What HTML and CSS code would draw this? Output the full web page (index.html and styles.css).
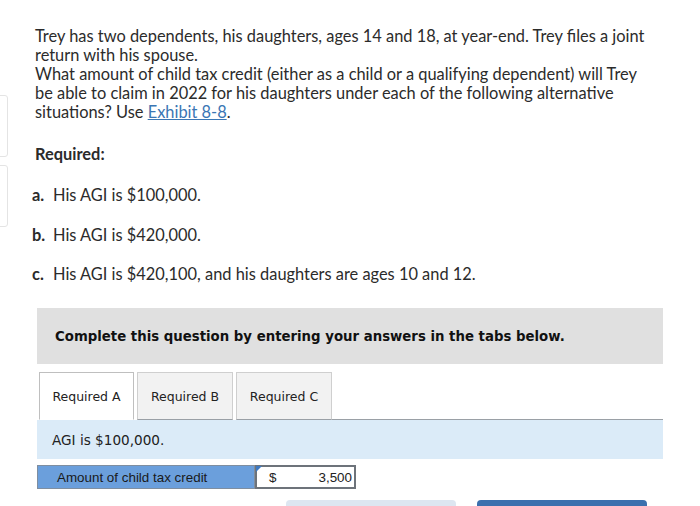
FILE: index.html
```html
<!DOCTYPE html>
<html>
<head>
<meta charset="utf-8">
<link rel="stylesheet" href="styles.css">
</head>
<body>
<div class="edge edge-top"></div>
<div class="edge edge-bottom"></div>
<main class="page">
  <p class="intro">Trey has two dependents, his daughters, ages 14 and 18, at year-end. Trey files a joint return with his spouse.<br>What amount of child tax credit (either as a child or a qualifying dependent) will Trey be able to claim in 2022 for his daughters under each of the following alternative situations? Use <a class="link" href="#">Exhibit 8-8</a>.</p>
  <p class="required">Required:</p>
  <ol class="items">
    <li><span class="mark">a.</span>His AGI is $100,000.</li>
    <li><span class="mark">b.</span>His AGI is $420,000.</li>
    <li><span class="mark">c.</span>His AGI is $420,100, and his daughters are ages 10 and 12.</li>
  </ol>
  <div class="notice">Complete this question by entering your answers in the tabs below.</div>
  <div class="tabs">
    <div class="tab active">Required A</div>
    <div class="tab">Required B</div>
    <div class="tab">Required C</div>
    <div class="tab-fill"></div>
  </div>
  <div class="panel">AGI is $100,000.</div>
  <div class="answer">
    <div class="answer-label">Amount of child tax credit</div>
    <div class="answer-input"><span class="dollar">$</span><span class="value">3,500</span></div>
  </div>
  <div class="buttons">
    <div class="btn btn-light"></div>
    <div class="btn btn-dark"></div>
  </div>
</main>
</body>
</html>
```

FILE: styles.css
```css
html, body {
  margin: 0;
  padding: 0;
  background: #ffffff;
  overflow: hidden;
}
body {
  width: 700px;
  height: 506px;
  position: relative;
}
.edge {
  position: absolute;
  left: -4px;
  width: 10px;
  border: 1px solid #e4e4e4;
  border-radius: 3px;
}
.edge-top { top: 95px; height: 60px; }
.edge-bottom { top: 165px; height: 60px; }
.page {
  padding: 26px 0 0 35px;
  width: 628px;
  font-family: "Lato", "Liberation Sans", sans-serif;
  color: #2b2b2b;
}
.intro {
  margin: 0;
  font-size: 16.4px;
  line-height: 19px;
  width: 614px;
}
.link {
  display: inline-block;
  line-height: 19px;
  color: #3a76b4;
  text-decoration: underline;
}
.required {
  margin: 23px 0 0 0;
  font-size: 16.4px;
  font-weight: bold;
  line-height: 19px;
}
.items {
  list-style: none;
  margin: 22px 0 0 -3px;
  padding: 0;
  font-size: 16.4px;
  line-height: 19px;
}
.items li {
  display: flex;
  margin-bottom: 21px;
}
.items li:nth-child(2) { margin-bottom: 20px; }
.items li:last-child { margin-bottom: 0; }
.mark {
  font-weight: bold;
  width: 21px;
}
.notice {
  margin: 25px 0 0 2px;
  width: 608px;
  height: 56px;
  padding-left: 18px;
  background: #e0e0e0;
  display: flex;
  align-items: center;
  font-family: "DejaVu Sans", Verdana, sans-serif;
  font-weight: bold;
  font-size: 13.3px;
  color: #111;
}
.tabs {
  display: flex;
  margin: 8px 0 0 2px;
  width: 626px;
  height: 48px;
  font-family: "DejaVu Sans", Verdana, sans-serif;
  font-size: 12.5px;
  color: #222;
}
.tab {
  margin-right: 3px;
  border: 1px solid #cfcfcf;
  border-bottom: 1px solid #9aa0a6;
  background: #f2f2f2;
  display: flex;
  align-items: center;
  justify-content: center;
  box-sizing: border-box;
  width: 96px;
}
.tab.active {
  background: #ffffff;
  border-color: #bfbfbf;
  border-bottom-color: #ffffff;
  margin-left: 2px;
  width: 95px;
}
.tab-fill {
  flex: 1;
  border-bottom: 1px solid #9aa0a6;
  margin-left: -3px;
}
.panel {
  margin-left: 2px;
  width: 611px;
  height: 39px;
  padding-left: 15px;
  background: #dbebf8;
  display: flex;
  align-items: center;
  font-family: "DejaVu Sans", Verdana, sans-serif;
  font-size: 13.6px;
  color: #222;
}
.answer {
  display: flex;
  margin: 6px 0 0 2px;
  height: 24px;
  font-family: "Liberation Sans", Arial, sans-serif;
  font-size: 13.4px;
}
.answer-label {
  width: 218px;
  box-sizing: border-box;
  padding-left: 19px;
  background: #6b9fdc;
  border: 1px solid #7f8ea0;
  display: flex;
  align-items: center;
  color: #1a1a1a;
}
.answer-input {
  position: relative;
  width: 101px;
  box-sizing: border-box;
  border: 2px solid #6d737a;
  background: #fff;
  display: flex;
  align-items: center;
  justify-content: space-between;
  padding: 0 2px 0 12px;
  color: #222;
}
.answer-input::before {
  content: "";
  position: absolute;
  left: -1px;
  top: -1px;
  border-top: 6px solid #3d78c0;
  border-right: 6px solid transparent;
}
.buttons {
  display: flex;
  gap: 21px;
  margin: 11px 0 0 251px;
}
.btn {
  width: 170px;
  height: 10px;
  border-radius: 4px 4px 0 0;
}
.btn-light { background: #dde6f1; }
.btn-dark { background: #3b70ae; }
```
